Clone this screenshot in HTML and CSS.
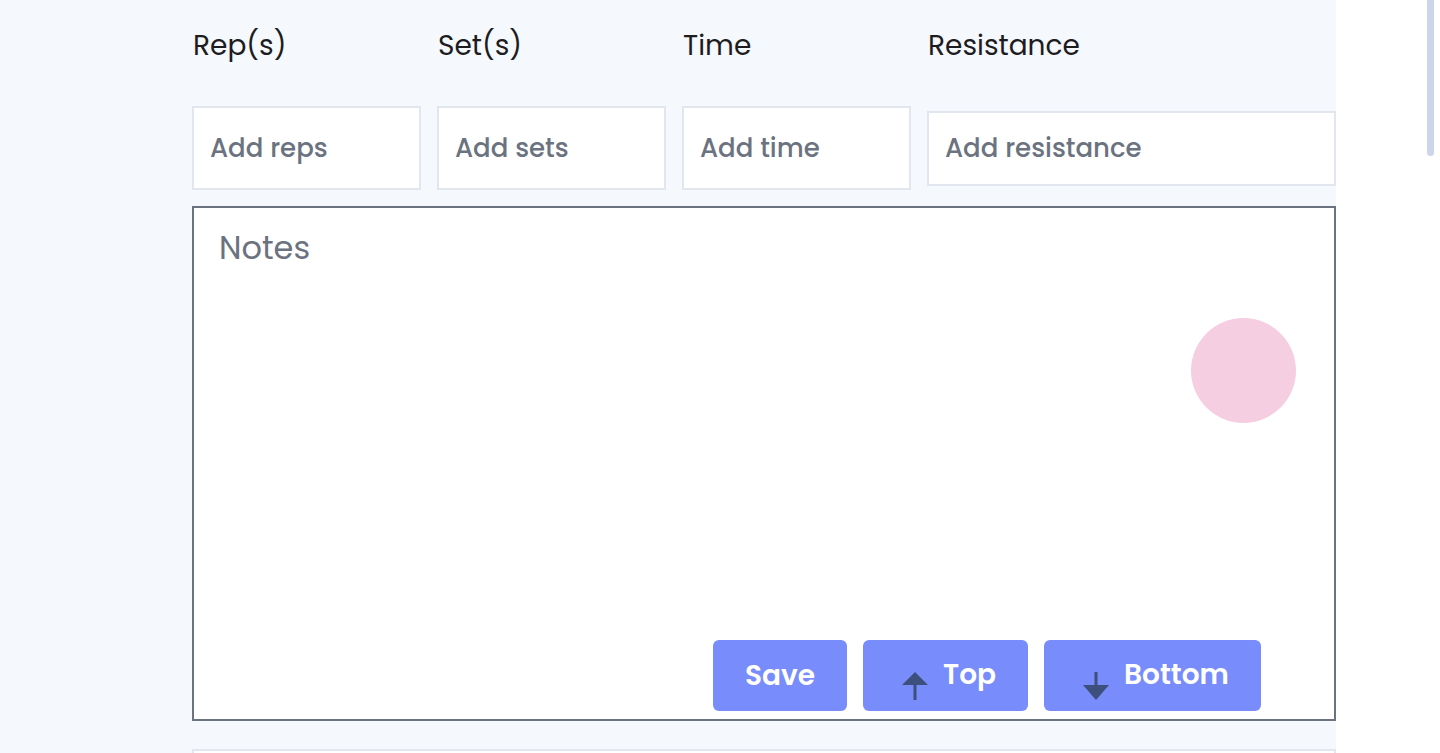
FILE: index.html
```html
<!DOCTYPE html>
<html lang="en">
<head>
<meta charset="utf-8">
<title>Exercise details</title>
<link rel="stylesheet" href="styles.css">
</head>
<body>
<div class="page">
  <main class="main">
    <div class="fields">
      <label class="label" for="reps">Rep(s)</label>
      <label class="label" for="sets">Set(s)</label>
      <label class="label" for="time">Time</label>
      <label class="label" for="resistance">Resistance</label>
      <input class="field" id="reps" type="text" placeholder="Add reps">
      <input class="field" id="sets" type="text" placeholder="Add sets">
      <input class="field" id="time" type="text" placeholder="Add time">
      <input class="field field-wide" id="resistance" type="text" placeholder="Add resistance">
    </div>
    <div class="notes-wrap">
      <textarea class="notes" placeholder="Notes"></textarea>
      <span class="blob"></span>
      <div class="actions">
        <button class="btn btn-save" type="button">Save</button>
        <button class="btn btn-icon btn-top" type="button">
          <svg class="arrow" width="26" height="28" viewBox="0 0 26 28" aria-hidden="true"><path d="M13 0 L26 13 L14.5 13 L14.5 28 L11.5 28 L11.5 13 L0 13 Z" fill="#3d4f7d"/></svg>
          <span>Top</span>
        </button>
        <button class="btn btn-icon btn-bottom" type="button">
          <svg class="arrow" width="26" height="28" viewBox="0 0 26 28" aria-hidden="true"><path d="M11.5 0 L14.5 0 L14.5 13 L26 13 L13 28 L0 13 L11.5 13 Z" fill="#3d4f7d"/></svg>
          <span>Bottom</span>
        </button>
      </div>
    </div>
    <div class="next-card"></div>
  </main>
  <aside class="gutter">
    <span class="thumb"></span>
  </aside>
</div>
</body>
</html>
```

FILE: styles.css
```css
* { box-sizing: border-box; }

html, body {
  margin: 0;
  height: 100%;
  overflow: hidden;
}

body {
  background: #ffffff;
  font-family: "Poppins", "Inter", "Noto Sans", sans-serif;
  color: #1d1d1f;
}

.page {
  display: flex;
  height: 753px;
}

.main {
  width: 1336px;
  flex: none;
  background: #f5f8fc;
  padding: 26px 0 0 192px;
  overflow: hidden;
}

.fields {
  display: grid;
  grid-template-columns: 229px 229px 229px 1fr;
  grid-template-rows: 40px 84px;
  column-gap: 16px;
  row-gap: 40px;
  align-items: center;
}

.label {
  font-size: 28px;
  font-weight: 400;
  line-height: 40px;
  color: #1d1d1f;
  padding-left: 1px;
}

.field {
  display: block;
  width: 100%;
  height: 84px;
  margin: 0;
  border: 2px solid #e2e6ee;
  border-radius: 0;
  background: #ffffff;
  padding: 0 16px;
  font-family: inherit;
  font-size: 26px;
  font-weight: 500;
  color: #1d1d1f;
  outline: none;
}

.field-wide {
  height: 75px;
}

.field::placeholder {
  color: #6b7280;
  opacity: 1;
}

.notes-wrap {
  position: relative;
  margin-top: 16px;
  height: 515px;
}

.notes {
  display: block;
  width: 100%;
  height: 100%;
  margin: 0;
  border: 2px solid #6b7280;
  border-radius: 0;
  background: #ffffff;
  padding: 19px 25px;
  font-family: inherit;
  font-size: 32px;
  line-height: 42px;
  color: #1d1d1f;
  resize: none;
  outline: none;
}

.notes::placeholder {
  color: #6b7280;
  opacity: 1;
}

.blob {
  position: absolute;
  right: 40px;
  top: 112px;
  width: 105px;
  height: 105px;
  border-radius: 50%;
  background: #f6cee2;
}

.actions {
  position: absolute;
  right: 75px;
  bottom: 10px;
  display: flex;
  gap: 16px;
}

.btn {
  display: flex;
  align-items: center;
  justify-content: center;
  gap: 15px;
  height: 71px;
  margin: 0;
  padding: 0;
  border: none;
  border-radius: 6px;
  background: #788cfb;
  color: #ffffff;
  font-family: inherit;
  font-size: 28px;
  font-weight: 600;
  line-height: 1;
  cursor: pointer;
}

.btn span {
  position: relative;
  top: -1px;
}

.btn-icon { padding-left: 7px; }

.btn-save { width: 134px; }
.btn-top { width: 165px; }
.btn-bottom { width: 217px; }

.arrow {
  flex: none;
  margin-top: 20px;
}

.next-card {
  margin-top: 28px;
  height: 60px;
  border: 2px solid #e2e6ee;
  background: #ffffff;
}

.gutter {
  flex: 1;
  position: relative;
  background: #ffffff;
}

.thumb {
  position: absolute;
  top: 0;
  right: 6px;
  width: 7px;
  height: 156px;
  background: #cdd5ea;
  border-radius: 0 0 4px 4px;
}
```
